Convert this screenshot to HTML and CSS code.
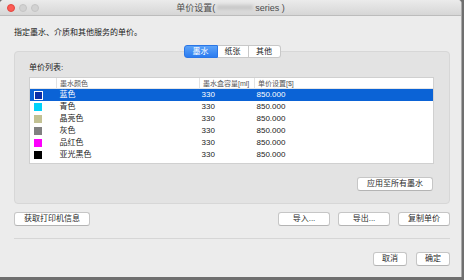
FILE: index.html
```html
<!DOCTYPE html>
<html>
<head>
    <title>单价设置</title>
    <link rel="stylesheet" href="styles.css">
</head>
<body>
    <div class="window">
        <!-- Title bar -->
        <div class="titlebar">
            <div class="lights">
                <span class="light close"></span>
                <span class="light"></span>
                <span class="light"></span>
            </div>
            <div class="title">单价设置(<span class="redacted"></span> series )</div>
            <div></div>
        </div>

        <div class="content">
            <p class="intro">指定墨水、介质和其他服务的单价。</p>

            <div class="tabs">
                <span class="tab active">墨水</span>
                <span class="tab">纸张</span>
                <span class="tab">其他</span>
            </div>

            <div class="group">
                <div class="group-label">单价列表:</div>
                <div class="list">
                    <table>
                        <thead>
                            <tr>
                                <th class="col-swatch"></th>
                                <th class="col-name">墨水颜色</th>
                                <th class="col-cap">墨水盒容量[ml]</th>
                                <th class="col-price">单价设置[$]</th>
                            </tr>
                        </thead>
                        <tbody>
                            <tr class="selected">
                                <td><span class="swatch sw-blue"></span></td>
                                <td>蓝色</td>
                                <td>330</td>
                                <td>850.000</td>
                            </tr>
                            <tr>
                                <td><span class="swatch sw-cyan"></span></td>
                                <td>青色</td>
                                <td>330</td>
                                <td>850.000</td>
                            </tr>
                            <tr>
                                <td><span class="swatch sw-chroma"></span></td>
                                <td>晶亮色</td>
                                <td>330</td>
                                <td>850.000</td>
                            </tr>
                            <tr>
                                <td><span class="swatch sw-gray"></span></td>
                                <td>灰色</td>
                                <td>330</td>
                                <td>850.000</td>
                            </tr>
                            <tr>
                                <td><span class="swatch sw-magenta"></span></td>
                                <td>品红色</td>
                                <td>330</td>
                                <td>850.000</td>
                            </tr>
                            <tr>
                                <td><span class="swatch sw-black"></span></td>
                                <td>亚光黑色</td>
                                <td>330</td>
                                <td>850.000</td>
                            </tr>
                        </tbody>
                    </table>
                </div>
                <div class="group-actions">
                    <button class="btn btn-apply">应用至所有墨水</button>
                </div>
            </div>

            <div class="actions">
                <button class="btn btn-info">获取打印机信息</button>
                <div class="actions-right">
                    <button class="btn btn-mid">导入...</button>
                    <button class="btn btn-mid">导出...</button>
                    <button class="btn btn-mid">复制单价</button>
                </div>
            </div>

            <div class="separator"></div>

            <div class="footer">
                <button class="btn btn-small">取消</button>
                <button class="btn btn-small">确定</button>
            </div>
        </div>
    </div>
</body>
</html>
```

FILE: styles.css
```css
body {
    margin: 0;
    background-color: #6f6f6f;
    font-family: "Liberation Sans", "Noto Sans CJK SC", sans-serif;
    color: #222;
}

.window {
    width: 461px;
    height: 277px;
    background-color: #ececec;
    border-right: 1px solid #a9a9a9;
    border-radius: 4px 4px 0 0;
    overflow: hidden;
}

/* Title bar */
.titlebar {
    height: 15px;
    display: grid;
    grid-template-columns: 1fr auto 1fr;
    align-items: center;
    background: linear-gradient(#ebebeb, #d6d6d6);
    border-bottom: 1px solid #bcbcbc;
}

.lights {
    display: flex;
    gap: 4px;
    padding-left: 7px;
}

.light {
    width: 8px;
    height: 8px;
    border-radius: 50%;
    background-color: #d2d2d2;
    box-sizing: border-box;
    border: 1px solid #c4c4c4;
}

.light.close {
    background-color: #fc5c55;
    border-color: #e2463f;
}

.title {
    font-size: 9px;
    color: #4c4c4c;
    display: flex;
    align-items: center;
}

.redacted {
    display: inline-block;
    width: 36px;
    height: 5px;
    margin: 0 2px 0 2px;
    background-color: #c9c9c9;
    filter: blur(1.5px);
}

/* Content */
.content {
    padding: 0 11px 0 14px;
}

.intro {
    margin: 11px 0 0 0;
    font-size: 8px;
    line-height: 12px;
    color: #1a1a1a;
}

.tabs {
    display: flex;
    justify-content: center;
    margin: 6px 0 -7px 0;
    position: relative;
    z-index: 1;
}

.tab {
    width: 30px;
    height: 11px;
    line-height: 11px;
    font-size: 8px;
    text-align: center;
    background-color: #fff;
    border: 1px solid #c8c8c8;
    border-left: none;
}

.tab:first-child {
    width: 32px;
    border-left: 1px solid #c8c8c8;
    border-radius: 3px 0 0 3px;
}

.tab:last-child {
    width: 31px;
    border-radius: 0 3px 3px 0;
}

.tab.active {
    background: linear-gradient(#5ba2f8, #2b7cf0);
    border-color: #2a76e6;
    color: #fff;
}

.group {
    background-color: #e3e3e3;
    border: 1px solid #d7d7d7;
    border-radius: 4px;
    padding: 11px 15px 12px 14px;
}

.group-label {
    font-size: 8px;
    line-height: 10px;
}

.list {
    margin-top: 4px;
    height: 85px;
    background-color: #fff;
    border: 1px solid #d0d0d0;
}

table {
    width: 100%;
    border-collapse: collapse;
    font-size: 8px;
}

th {
    height: 10px;
    padding: 0 0 0 3px;
    font-size: 7px;
    font-weight: normal;
    text-align: left;
    color: #555;
    border-left: 1px solid #e2e2e2;
    border-bottom: 1px solid #e6e6e6;
}

th.col-swatch {
    width: 23px;
    border-left: none;
}

th.col-name {
    width: 139px;
}

th.col-cap {
    width: 51px;
}

td {
    height: 12px;
    padding: 0 0 0 3px;
    line-height: 12px;
}

td:first-child {
    padding-left: 4px;
}

td:nth-child(3),
td:nth-child(4) {
    padding-left: 2px;
}

tr.selected td {
    background-color: #0b63d6;
    color: #fff;
}

.swatch {
    display: block;
    width: 8px;
    height: 8px;
}

.sw-blue {
    background-color: #0b2fa8;
    box-sizing: border-box;
    border: 1px solid #fff;
    width: 9px;
    height: 9px;
}

.sw-cyan { background-color: #00d2fa; }
.sw-chroma { background-color: #c2c193; }
.sw-gray { background-color: #808080; }
.sw-magenta { background-color: #fd00fd; }
.sw-black { background-color: #000; }

.group-actions {
    display: flex;
    justify-content: flex-end;
    margin-top: 13px;
}

/* Buttons */
.btn {
    height: 14px;
    padding: 0;
    font-family: inherit;
    font-size: 8px;
    line-height: 12px;
    color: #2a2a2a;
    background-color: #fff;
    border: 1px solid #c6c6c6;
    border-bottom-color: #b4b4b4;
    border-radius: 3px;
}

.btn-apply {
    width: 76px;
    margin-right: 1px;
}

.btn-info {
    width: 76px;
}

.btn-mid {
    width: 52px;
}

.btn-small {
    width: 34px;
}

.actions {
    display: flex;
    justify-content: space-between;
    margin-top: 8px;
}

.actions-right {
    display: flex;
    gap: 8px;
}

.separator {
    height: 1px;
    margin-top: 12px;
    background-color: #d6d6d6;
}

.footer {
    display: flex;
    justify-content: flex-end;
    gap: 9px;
    margin-top: 13px;
}
```
